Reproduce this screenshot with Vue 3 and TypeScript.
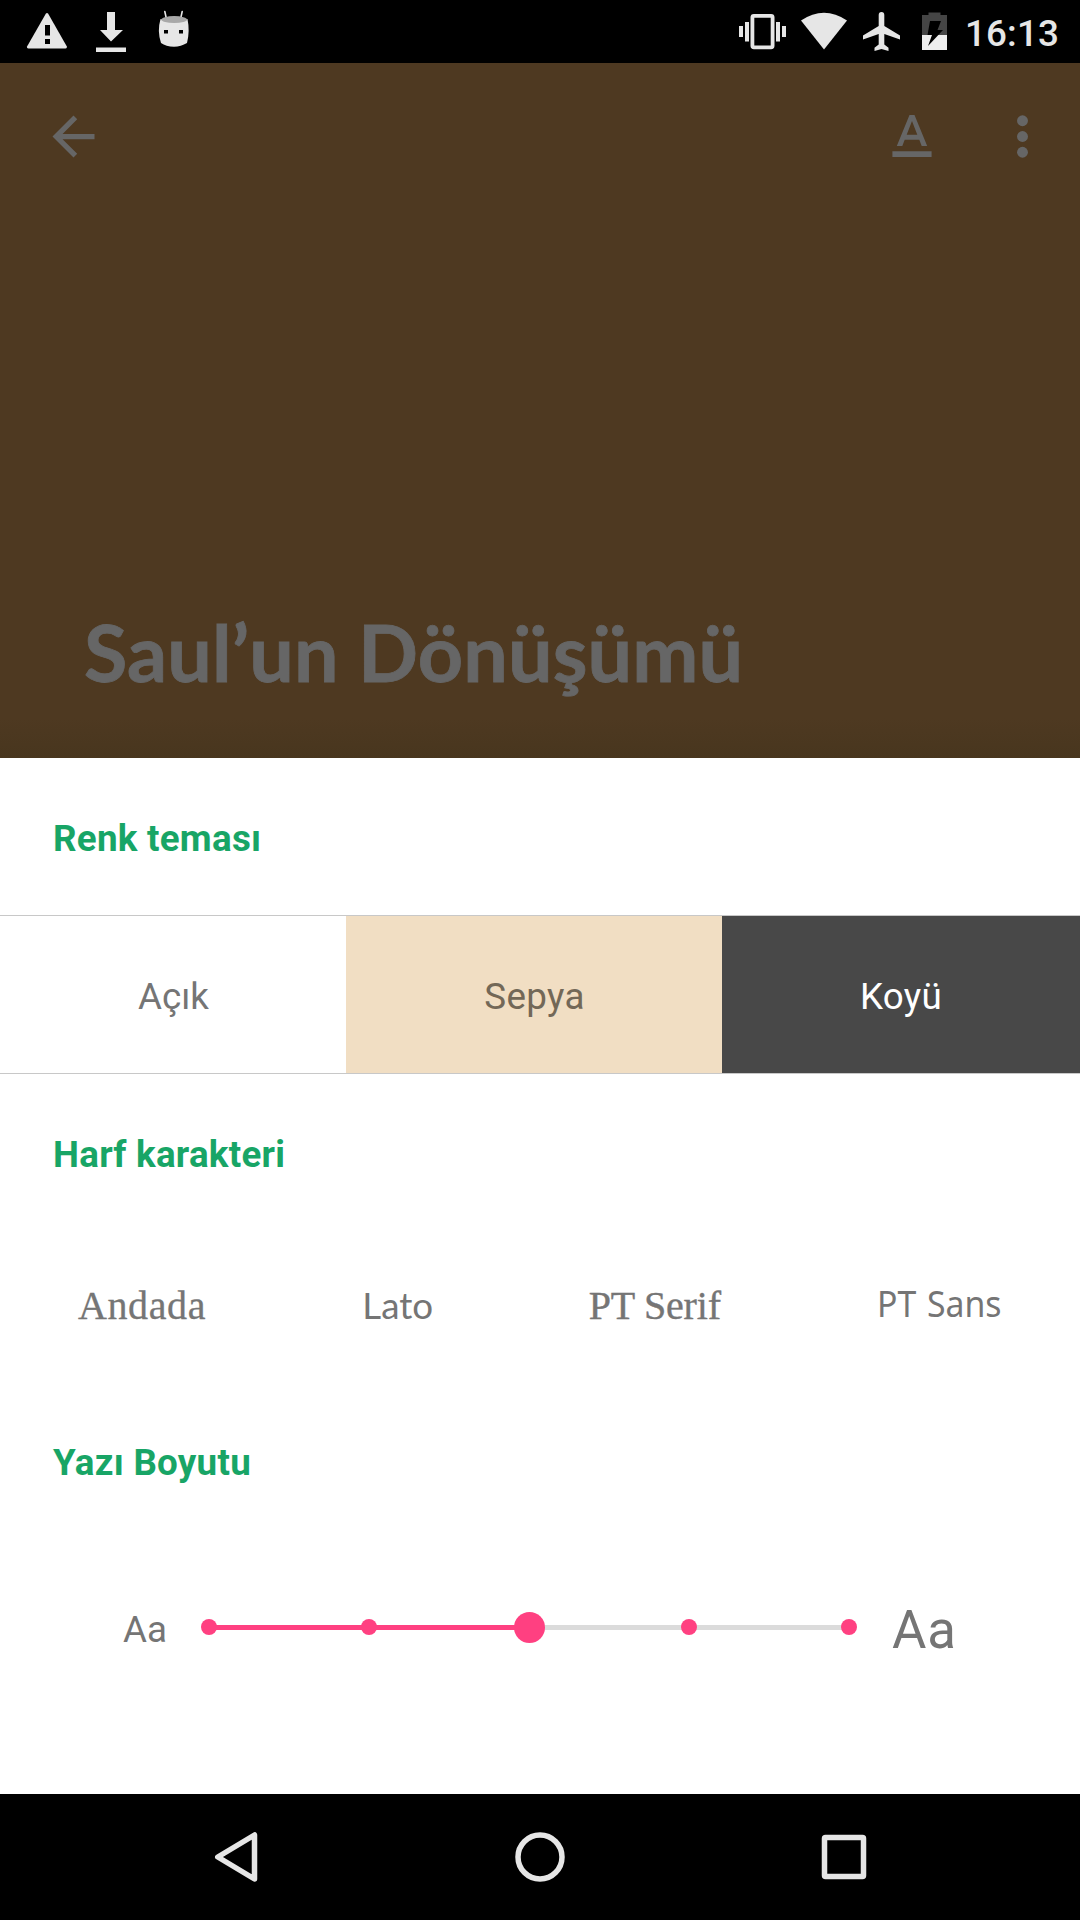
<script setup lang="ts">
interface Theme {
  id: string
  label: string
}

interface FontChoice {
  id: string
  label: string
}

const themes: Theme[] = [
  { id: 'light', label: 'Açık' },
  { id: 'sepia', label: 'Sepya' },
  { id: 'dark', label: 'Koyü' },
]

const fonts: FontChoice[] = [
  { id: 'andada', label: 'Andada' },
  { id: 'lato', label: 'Lato' },
  { id: 'pt-serif', label: 'PT Serif' },
  { id: 'pt-sans', label: 'PT Sans' },
]

const steps = [0, 1, 2, 3, 4]
const current = 2
</script>

<template>
  <div class="screen">
    <header class="status">
      <svg class="status-left" width="200" height="63" viewBox="0 0 200 63" fill="#e6e6e6">
        <path d="M45.8 13.8Q47 12.4 48.2 13.8L66.7 46.2Q67.4 48.4 65.5 48.5H28.5Q26.5 48.4 27.2 46.2Z" />
        <path d="M45 25h5v10.500h-5zM45 39h5v5h-5z" fill="#000" />
        <path d="M107 12h8v18h8L111 41.500 100 30h7zM96 47.500h30V52H96z" />
        <path d="M164.800 11.500l2 9M182.200 11.500l-2 9" stroke="#e6e6e6" stroke-width="1.600" stroke-linecap="round" />
        <path d="M160.500 19Q174 24 187.500 19Q190 31 187 43Q181 46.700 174 46.700Q166 46.700 161 43Q157 31 160.500 19Z" />
        <ellipse cx="174.200" cy="19.600" rx="13" ry="3.500" fill="#a8a8a8" />
        <path d="M164 30h4v3.500h-4zM179 30h4v3.500h-4z" fill="#000" />
      </svg>
      <div class="status-right">
        <svg width="220" height="63" viewBox="735 0 220 63" fill="#e6e6e6">
          <path d="M739 26h4v11h-4zM745 22h4v19.500h-4zM776 22h4v19.500h-4zM782 26h4v11h-4z" />
          <rect x="752.400" y="15.800" width="20.200" height="31.500" rx="1.500" fill="none" stroke="#e6e6e6" stroke-width="3.800" />
          <path d="M801 20.500Q824 5 847 20.500L824 49.500Z" />
          <path d="M881.500 12q2.800 0 2.800 3v11L900 35.500v4L884.300 34v10.500l4.200 3.300V51l-7-2-7 2v-3.200l4.200-3.300V34L863 39.500v-4L878.700 26V15q0-3 2.800-3z" />
          <path d="M928.500 12.500h12V15h6.500v20h-25V15h6.500z" fill="#454545" />
          <path d="M922 35h25v15h-25z" fill="#eee" />
          <path d="M930 21h11l-3.500 9H943L928 46l4-11h-4.500z" fill="#000" />
        </svg>
        <span class="clock">16:13</span>
      </div>
    </header>

    <section class="hero">
      <div class="toolbar">
        <svg class="back" width="63" height="63" viewBox="0 0 24 24" fill="#666">
          <path d="M20 11H7.830l5.590-5.590L12 4l-8 8 8 8 1.410-1.410L7.830 13H20v-2z" />
        </svg>
        <div class="actions">
          <svg width="40" height="63" viewBox="0 0 40 63" fill="#666" fill-rule="evenodd">
            <path d="M17.500 10h5L35.200 41h-5.500l-2.400-6.200H12.700L10.300 41H4.800zM14.700 29.800h10.600L20 16z" />
            <path d="M.4 46.200h39.200V52H.4z" />
          </svg>
          <svg width="63" height="63" viewBox="0 0 24 24" fill="#666">
            <circle v-for="y in [6, 12, 18]" :key="y" cx="12" :cy="y" r="2.080" />
          </svg>
        </div>
      </div>
      <h1>Saul’un Dönüşümü</h1>
    </section>

    <main class="sheet">
      <h2>Renk teması</h2>
      <div class="themes">
        <div v-for="theme in themes" :key="theme.id" class="theme" :class="theme.id">{{ theme.label }}</div>
      </div>
      <h2>Harf karakteri</h2>
      <div class="fonts">
        <span v-for="font in fonts" :key="font.id" class="font" :class="font.id">{{ font.label }}</span>
      </div>
      <h2>Yazı Boyutu</h2>
      <div class="size">
        <span class="small">Aa</span>
        <div class="slider">
          <template v-for="step in steps" :key="step">
            <i v-if="step > 0" class="track" :class="{ active: step <= current }"></i>
            <b class="stop" :class="{ thumb: step === current }"></b>
          </template>
        </div>
        <span class="large">Aa</span>
      </div>
    </main>

    <footer class="nav">
      <svg width="54" height="60" viewBox="209 1827 54 60">
        <path d="M254.500 1835V1879L217.800 1857Z" />
      </svg>
      <svg width="60" height="60" viewBox="510 1827 60 60">
        <circle cx="540" cy="1857" r="22" />
      </svg>
      <svg width="54" height="60" viewBox="817 1827 54 60">
        <rect x="824.500" y="1837.500" width="39" height="39" rx="1" />
      </svg>
    </footer>
  </div>
</template>

<style>
body {
  margin: 0;
  background: #000;
}
</style>

<style scoped>
.screen {
  display: flex;
  flex-direction: column;
  width: 1080px;
  height: 1920px;
  overflow: hidden;
  background: #fff;
  font-family: Roboto, "Liberation Sans", sans-serif;
  font-size: 36.75px;
  color: #757575;
}
svg {
  display: block;
  flex: none;
}
.status {
  display: flex;
  justify-content: space-between;
  height: 63px;
  background: #000;
}
.status-right {
  display: flex;
  padding-right: 21px;
}
.clock {
  width: 94px;
  margin-left: 10px;
  padding-top: 4px;
  line-height: 59px;
  font-weight: 500;
  letter-spacing: 0.15px;
  color: #e6e6e6;
  white-space: nowrap;
}
.hero {
  display: flex;
  flex-direction: column;
  justify-content: space-between;
  height: 695px;
  box-sizing: border-box;
  padding-bottom: 58px;
  background: linear-gradient(to bottom, #4e3921 0, #4e3921 655px, #48361e 695px);
}
.toolbar {
  display: flex;
  align-items: center;
  justify-content: space-between;
  padding: 42px 26px 0 42px;
}
.actions {
  display: flex;
  gap: 59px;
}
h1 {
  margin: 0 0 0 84px;
  font-family: Lato, sans-serif;
  font-size: 79px;
  line-height: 96px;
  font-weight: 700;
  letter-spacing: 0.15px;
  color: #666;
  -webkit-text-stroke: 0.8px #666;
  white-space: nowrap;
}
.sheet {
  display: flex;
  flex-direction: column;
  height: 1036px;
}
h2 {
  box-sizing: border-box;
  height: 157px;
  margin: 0;
  padding: 4px 53px 0;
  font-size: 36.75px;
  line-height: 153px;
  font-weight: 700;
  letter-spacing: 0.26px;
  color: #18a566;
}
.themes {
  display: flex;
  height: 157px;
  border-top: 1px solid #c8c8c8;
  border-bottom: 1px solid #c8c8c8;
}
.theme {
  box-sizing: border-box;
  padding-top: 5px;
  line-height: 152px;
  letter-spacing: 0.3px;
  text-align: center;
}
.light {
  width: 346px;
  padding-left: 1px;
  letter-spacing: 0;
}
.sepia {
  width: 376px;
  padding-left: 1px;
  background: #f1dec3;
  color: #736857;
}
.dark {
  width: 358px;
  background: #484848;
  color: #fff;
}
.fonts {
  display: flex;
  justify-content: space-between;
  align-items: baseline;
  box-sizing: border-box;
  height: 151px;
  padding: 46px 80px 0 78px;
  line-height: 56px;
}
.font {
  white-space: nowrap;
}
.andada {
  width: 127px;
  font-family: "Liberation Serif", serif;
  font-size: 40px;
  letter-spacing: 0.6px;
  -webkit-text-stroke: 0.3px #757575;
}
.lato {
  width: 69px;
  font-family: Lato, sans-serif;
}
.pt-serif {
  width: 131px;
  font-family: "Liberation Serif", serif;
  font-size: 40px;
  letter-spacing: -0.2px;
  -webkit-text-stroke: 0.4px #757575;
}
.pt-sans {
  width: 123px;
  font-family: "Noto Sans", sans-serif;
  word-spacing: 2px;
  transform: translateY(-2px) scaleX(0.92);
  transform-origin: left;
}
.size {
  display: flex;
  align-items: center;
  height: 176px;
  padding-left: 123px;
}
.small {
  width: 78px;
  padding-top: 5px;
}
.slider {
  display: flex;
  align-items: center;
  width: 656px;
}
.track {
  flex: 1;
  height: 5px;
  margin: 0 -2px;
  background: #dbdbdb;
}
.track.active {
  background: #ff4081;
}
.stop {
  z-index: 1;
  flex: none;
  width: 16px;
  height: 16px;
  border-radius: 50%;
  background: #ff4081;
}
.stop.thumb {
  width: 31px;
  height: 31px;
  margin: 0 -7.5px;
}
.large {
  margin-left: 35px;
  padding-top: 6px;
  font-size: 52.8px;
  letter-spacing: 0.7px;
}
.nav {
  display: flex;
  justify-content: space-between;
  align-items: center;
  height: 126px;
  box-sizing: border-box;
  padding: 0 209px;
  background: #000;
}
.nav svg {
  fill: none;
  stroke: #e6e6e6;
  stroke-width: 5.5;
  stroke-linejoin: round;
}
</style>
